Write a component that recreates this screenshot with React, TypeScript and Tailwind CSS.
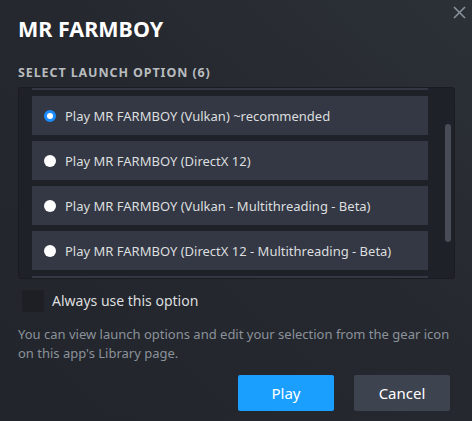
import React from "react";

const options = [
  "Play MR FARMBOY",
  "Play MR FARMBOY (Vulkan) ~recommended",
  "Play MR FARMBOY (DirectX 12)",
  "Play MR FARMBOY (Vulkan - Multithreading - Beta)",
  "Play MR FARMBOY (DirectX 12 - Multithreading - Beta)",
  "Play MR FARMBOY (Safe Mode)",
];

export default function App() {
  return (
    <div
      className="relative w-[472px] h-[421px] overflow-hidden bg-[linear-gradient(to_bottom_left,#2c3037_0%,#25282f_45%,#22252c_100%)] text-white"
      style={{ fontFamily: '"Noto Sans", "Open Sans", Arial, sans-serif' }}
    >
      <button className="absolute right-[6px] top-[6px] w-[13px] h-[13px] text-[#8b929a]">
        <svg viewBox="0 0 13 13" width="13" height="13" fill="none" stroke="currentColor" strokeWidth="1.6">
          <path d="M1 1L12 12M12 1L1 12" />
        </svg>
      </button>

      <div className="flex flex-col px-[18px] pt-[14px]">
        <h1 className="text-[21.5px] leading-[30px] font-bold text-white">MR FARMBOY</h1>

        <div className="mt-[20px] text-[12.5px] leading-[18px] font-bold tracking-[0.9px] text-[#b8bcbf]">
          SELECT LAUNCH OPTION (6)
        </div>

        <div className="relative mt-[5px] h-[192px] w-[437px] overflow-hidden rounded-[3px] bg-[#1f2128] border border-[#1a1c21]">
          <div className="mt-[-37px] ml-[13px] flex w-[396px] flex-col gap-[6px]">
            {options.map((o, i) => (
              <div key={i} className="flex h-[39px] items-center gap-[9px] bg-[#333844] pl-[12px]">
                {i === 1 ? (
                  <span className="h-[12px] w-[12px] shrink-0 rounded-full border-[3px] border-[#1a8cff] bg-white" />
                ) : (
                  <span className="h-[12px] w-[12px] shrink-0 rounded-full bg-white" />
                )}
                <span className="text-[13px] leading-[18px] text-[#dcdedf]">{o}</span>
              </div>
            ))}
          </div>
          <div className="absolute left-[426px] top-[36px] h-[118px] w-[6px] rounded-[3px] bg-[#474c56]" />
        </div>

        <div className="mt-[11px] ml-[4px] flex items-center gap-[8px]">
          <span className="h-[22px] w-[22px] shrink-0 rounded-[2px] bg-[#1d1f24]" />
          <span className="text-[14px] leading-[20px] text-[#dcdedf]">Always use this option</span>
        </div>

        <p className="mt-[13px] text-[13px] leading-[19px] text-[#8b929a]">
          You can view launch options and edit your selection from the gear icon on this app's Library page.
        </p>

        <div className="mt-[12px] flex justify-end gap-[20px] pr-[4px]">
          <button className="h-[36px] w-[96px] rounded-[2px] bg-[#1a9fff] text-[15px] text-white">Play</button>
          <button className="h-[36px] w-[96px] rounded-[2px] bg-[#3d4450] text-[15px] text-white">Cancel</button>
        </div>
      </div>
    </div>
  );
}
